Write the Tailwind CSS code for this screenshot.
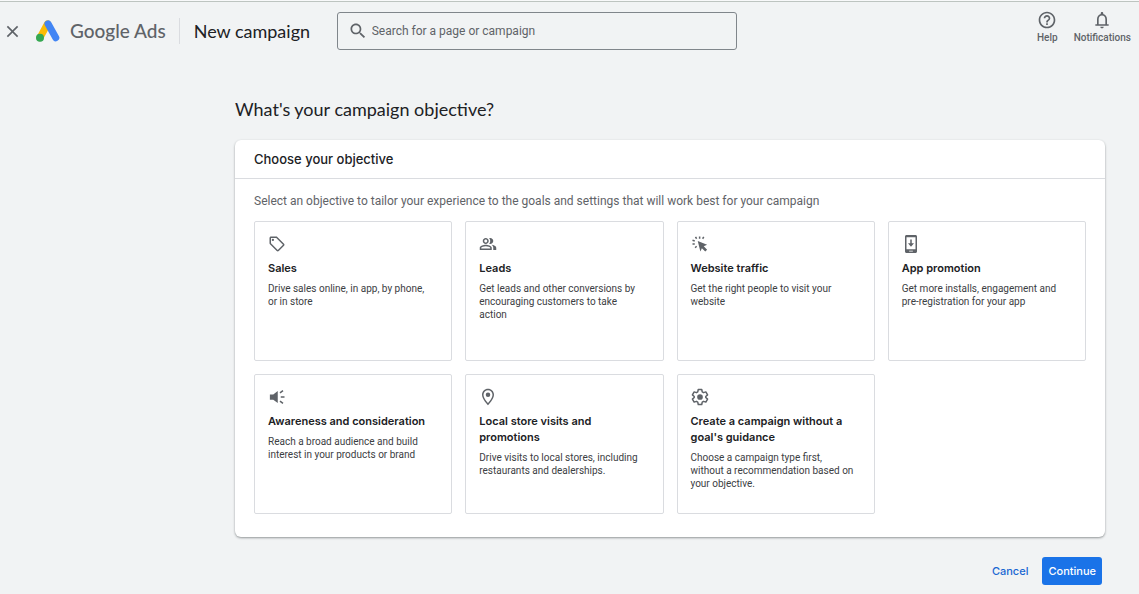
<!DOCTYPE html>
<html lang="en">
<head>
  <meta charset="UTF-8" />
  <meta name="viewport" content="width=device-width, initial-scale=1.0" />
  <title>New campaign - Google Ads</title>
  <script src="https://cdn.jsdelivr.net/npm/@tailwindcss/browser@4"></script>
</head>
<body class="min-h-screen bg-[#f1f3f4] font-[Roboto,sans-serif] text-[#202124]">
  <div class="h-px bg-[#f8f9fa]"></div>
  <header class="flex items-start border-t border-[#bdc4c0] pr-2 pl-1">
    <div class="flex h-[58px] items-center">
      <button type="button" aria-label="Close" class="flex">
        <svg class="size-[17px]" viewBox="0 0 24 24" fill="#5f6368"><path d="M19 6.41L17.59 5 12 10.59 6.41 5 5 6.41 10.59 12 5 17.59 6.41 19 12 13.41 17.59 19 19 17.59 13.41 12z" transform="translate(-1.8 -1.8) scale(1.15)"/></svg>
      </button>
      <a href="#" class="ml-[15px] flex items-center gap-2.5 font-[Lato,sans-serif] text-[19px] font-medium text-[#5f6368]">
        <svg class="h-[22px] w-6" viewBox="0 0 24 22" fill="none" stroke-width="7" stroke-linecap="round">
          <path d="M11.6 3.8L4 17.6" stroke="#fbbc04"/>
          <path d="M12 3.8l7.8 14" stroke="#4285f4"/>
          <circle cx="4" cy="17.8" r="4" fill="#34a853"/>
        </svg>
        Google Ads
      </a>
      <div class="ml-[13px] h-[26px] w-px bg-[#dadce0]"></div>
      <h1 class="ml-3.5 w-[143px] font-[Lato,sans-serif] text-lg">New campaign</h1>
    </div>
    <label class="mt-2.5 flex h-[38px] w-[400px] items-center gap-1 rounded-[3px] border border-[#80868b] pl-2.5">
      <svg class="size-5" viewBox="0 0 24 24" fill="#5f6368"><path d="M15.5 14h-.79l-.28-.27C15.41 12.59 16 11.11 16 9.5 16 5.91 13.09 3 9.5 3S3 5.91 3 9.5 5.91 16 9.5 16c1.61 0 3.09-.59 4.23-1.57l.27.28v.79l5 4.99L20.49 19l-4.99-5zm-6 0C7.01 14 5 11.99 5 9.5S7.01 5 9.5 5 14 7.01 14 9.5 11.99 14 9.5 14z"/></svg>
      <input type="search" aria-label="Search for a page or campaign" placeholder="Search for a page or campaign" class="flex-1 text-xs outline-none placeholder:text-[#5f6368]" />
    </label>
    <nav class="mt-2 ml-auto flex gap-4 text-[10px] font-medium text-[#5f6368]">
      <button type="button" class="flex flex-col items-center">
        <svg class="size-5" viewBox="0 0 24 24" fill="#5f6368"><path d="M11 18h2v-2h-2v2zm1-16C6.48 2 2 6.48 2 12s4.48 10 10 10 10-4.48 10-10S17.52 2 12 2zm0 18c-4.41 0-8-3.59-8-8s3.59-8 8-8 8 3.59 8 8-3.59 8-8 8zm0-14c-2.21 0-4 1.79-4 4h2c0-1.1.9-2 2-2s2 .9 2 2c0 2-3 1.75-3 5h2c0-2.25 3-2.5 3-5 0-2.21-1.79-4-4-4z"/></svg>
        Help
      </button>
      <button type="button" class="flex flex-col items-center">
        <svg class="size-5" viewBox="0 0 24 24" fill="#5f6368"><path d="M18 17v-6c0-3.07-1.63-5.64-4.5-6.32V4c0-.83-.67-1.5-1.5-1.5s-1.5.67-1.5 1.5v.68C7.64 5.36 6 7.92 6 11v6H4v2h16v-2h-2zm-2 0H8v-6c0-2.48 1.51-4.5 4-4.5s4 2.02 4 4.5v6zM12 22c1.1 0 2-.9 2-2h-4c0 1.1.9 2 2 2z"/></svg>
        Notifications
      </button>
    </nav>
  </header>

  <main class="mt-[37px] mr-[34px] ml-[235px]">
    <h2 class="font-[Lato,sans-serif] text-lg leading-6">What's your campaign objective?</h2>

    <section class="mt-[19px] rounded-md bg-white shadow-[0_1px_2px_rgba(60,64,67,0.4),0_1px_3px_rgba(60,64,67,0.15)]">
      <h3 class="border-b border-[#dadce0] px-[19px] py-[9px] font-[Inter,sans-serif] text-[13px] leading-5 font-medium">Choose your objective</h3>
      <div class="px-[19px] pt-3.5 pb-[23px]">
        <p class="text-xs leading-4 text-[#5f6368]">Select an objective to tailor your experience to the goals and settings that will work best for your campaign</p>

        <div class="mt-3 grid auto-rows-[140px] grid-cols-4 gap-[13px]">
          <button type="button" class="flex flex-col items-start rounded-xs border border-[#dadce0] py-[13px] pr-[17px] pl-[13px] text-left">
            <svg class="size-[18px]" viewBox="0 0 24 24" fill="#5f6368"><path d="M21.4 11.6l-9-9C12.05 2.2 11.55 2 11 2H4c-1.1 0-2 .9-2 2v7c0 .55.2 1.05.6 1.4l9 9c.35.4.85.6 1.4.6s1.05-.2 1.4-.6l7-7c.4-.35.6-.85.6-1.4s-.2-1.05-.6-1.4zM13 20l-9-9V4h7l9 9-7 7z"/><circle cx="6.5" cy="6.5" r="1.5"/></svg>
            <span class="mt-[7px] font-[Inter,sans-serif] text-[11px] leading-4 font-semibold">Sales</span>
            <span class="mt-1.5 text-[10px] leading-[13px] text-[#3c4043]">Drive sales online, in app, by phone, or in store</span>
          </button>

          <button type="button" class="flex flex-col items-start rounded-xs border border-[#dadce0] py-[13px] pr-[17px] pl-[13px] text-left">
            <svg class="size-[18px]" viewBox="0 0 24 24" fill="#5f6368"><path d="M9 12c2.2 0 4-1.8 4-4s-1.8-4-4-4-4 1.8-4 4 1.8 4 4 4zm0-6c1.1 0 2 .9 2 2s-.9 2-2 2-2-.9-2-2 .9-2 2-2zM9 13c-2.7 0-8 1.3-8 4v3h16v-3c0-2.7-5.3-4-8-4zm6 5H3v-1c0-.7 3.2-2 6-2s6 1.3 6 2v1zM15 12c2.2 0 4-1.8 4-4s-1.8-4-4-4c-.5 0-1 .1-1.4.25C14.5 5.3 15 6.6 15 8s-.5 2.7-1.4 3.75c.4.15.9.25 1.4.25zM16.7 13.1C18 14 19 15.3 19 17v3h4v-3c0-2.2-3.5-3.5-6.3-3.9z"/></svg>
            <span class="mt-[7px] font-[Inter,sans-serif] text-[11px] leading-4 font-semibold">Leads</span>
            <span class="mt-1.5 text-[10px] leading-[13px] text-[#3c4043]">Get leads and other conversions by encouraging customers to take action</span>
          </button>

          <button type="button" class="flex flex-col items-start rounded-xs border border-[#dadce0] py-[13px] pr-[17px] pl-[13px] text-left">
            <svg class="size-[18px]" viewBox="0 0 24 24" fill="#5f6368"><path d="M9 8l12.5 5-4.5 2 4.5 4.5-2.5 2.5-4.500-4.500-2 4.500z"/><path d="M11.5 2v3M6 2.500l1.500 2.500M17 2.500l-1.500 2.500M2 7l3 1M2 12h3M5.500 17l2-2" fill="none" stroke="#5f6368" stroke-width="2"/></svg>
            <span class="mt-[7px] font-[Inter,sans-serif] text-[11px] leading-4 font-semibold">Website traffic</span>
            <span class="mt-1.5 text-[10px] leading-[13px] text-[#3c4043]">Get the right people to visit your website</span>
          </button>

          <button type="button" class="flex flex-col items-start rounded-xs border border-[#dadce0] py-[13px] pr-[17px] pl-[13px] text-left">
            <svg class="size-[18px]" viewBox="0 0 24 24" fill="#5f6368"><path fill-rule="evenodd" d="M6 0h12c1.1 0 2 .9 2 2v20c0 1.1-.9 2-2 2H6c-1.1 0-2-.9-2-2V2c0-1.1.9-2 2-2zM6 3v16h12V3zM9.500 21v1h5v-1z"/><path d="M11 6h2v5h3l-4 4.500L8 11h3z"/></svg>
            <span class="mt-[7px] font-[Inter,sans-serif] text-[11px] leading-4 font-semibold">App promotion</span>
            <span class="mt-1.5 text-[10px] leading-[13px] text-[#3c4043]">Get more installs, engagement and pre-registration for your app</span>
          </button>

          <button type="button" class="flex flex-col items-start rounded-xs border border-[#dadce0] py-[13px] pr-[17px] pl-[13px] text-left">
            <svg class="size-[18px]" viewBox="0 0 24 24" fill="#5f6368"><path d="M2.500 8.500h4.500L13 4v16l-6-4.500H2.500z"/><path d="M16 6.500l4-3M17 12h5M16 17.500l4 3" fill="none" stroke="#5f6368" stroke-width="2"/></svg>
            <span class="mt-[7px] font-[Inter,sans-serif] text-[11px] leading-4 font-semibold">Awareness and consideration</span>
            <span class="mt-1.5 text-[10px] leading-[13px] text-[#3c4043]">Reach a broad audience and build interest in your products or brand</span>
          </button>

          <button type="button" class="flex flex-col items-start rounded-xs border border-[#dadce0] py-[13px] pr-[17px] pl-[13px] text-left">
            <svg class="size-[18px]" viewBox="0 0 24 24" fill="#5f6368"><path d="M12 1C7.6 1 4 4.5 4 9c0 6 8 14 8 14s8-8 8-14c0-4.500-3.600-8-8-8zM6 9c0-3.300 2.700-6 6-6s6 2.700 6 6c0 3.500-3.500 8.500-6 11-2.500-2.500-6-7.500-6-11z"/><circle cx="12" cy="9" r="3"/></svg>
            <span class="mt-[7px] font-[Inter,sans-serif] text-[11px] leading-4 font-semibold">Local store visits and promotions</span>
            <span class="mt-1.5 text-[10px] leading-[13px] text-[#3c4043]">Drive visits to local stores, including restaurants and dealerships.</span>
          </button>

          <button type="button" class="flex flex-col items-start rounded-xs border border-[#dadce0] py-[13px] pr-[17px] pl-[13px] text-left">
            <svg class="size-[18px]" viewBox="0 0 24 24" fill="#5f6368"><path d="M9.700 2h4.600l.7 3.200 1.700 1 3.100-1 2.300 4-2.400 2.200v1.200l2.400 2.200-2.300 4-3.100-1-1.700 1-.7 3.200H9.700L9 18.800l-1.700-1-3.100 1-2.300-4 2.400-2.200v-1.200L1.900 9.200l2.300-4 3.100 1 1.700-1z" fill="none" stroke="#5f6368" stroke-width="2" stroke-linejoin="round"/><circle cx="12" cy="12" r="3.800"/></svg>
            <span class="mt-[7px] font-[Inter,sans-serif] text-[11px] leading-4 font-semibold">Create a campaign without a goal's guidance</span>
            <span class="mt-1.5 text-[10px] leading-[13px] text-[#3c4043]">Choose a campaign type first, without a recommendation based on your objective.</span>
          </button>
        </div>
      </div>
    </section>

    <div class="mt-5 mr-[3px] flex justify-end gap-2 pb-2 font-[Inter,sans-serif] text-[11px] font-medium">
      <button type="button" class="h-7 px-1.5 text-[#1967d2]">Cancel</button>
      <button type="button" class="h-7 rounded-[3px] bg-[#1a73e8] px-1.5 text-white">Continue</button>
    </div>
  </main>
</body>
</html>
